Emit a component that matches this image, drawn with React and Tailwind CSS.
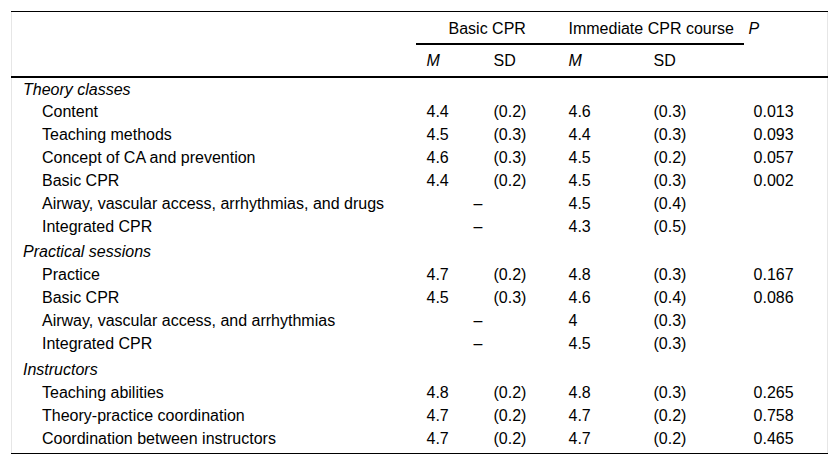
const rows = [
  { section: "Theory classes", h: "h-[22px] pt-[3px]" },
  { label: "Content", m1: "4.4", sd1: "(0.2)", m2: "4.6", sd2: "(0.3)", p: "0.013" },
  { label: "Teaching methods", m1: "4.5", sd1: "(0.3)", m2: "4.4", sd2: "(0.3)", p: "0.093" },
  { label: "Concept of CA and prevention", m1: "4.6", sd1: "(0.3)", m2: "4.5", sd2: "(0.2)", p: "0.057" },
  { label: "Basic CPR", m1: "4.4", sd1: "(0.2)", m2: "4.5", sd2: "(0.3)", p: "0.002" },
  { label: "Airway, vascular access, arrhythmias, and drugs", dash: true, m2: "4.5", sd2: "(0.4)" },
  { label: "Integrated CPR", dash: true, m2: "4.3", sd2: "(0.5)" },
  { section: "Practical sessions", h: "h-[25px] pt-[6px]" },
  { label: "Practice", m1: "4.7", sd1: "(0.2)", m2: "4.8", sd2: "(0.3)", p: "0.167" },
  { label: "Basic CPR", m1: "4.5", sd1: "(0.3)", m2: "4.6", sd2: "(0.4)", p: "0.086" },
  { label: "Airway, vascular access, and arrhythmias", dash: true, m2: "4", sd2: "(0.3)" },
  { label: "Integrated CPR", dash: true, m2: "4.5", sd2: "(0.3)" },
  { section: "Instructors", h: "h-[26px] pt-[7px]" },
  { label: "Teaching abilities", m1: "4.8", sd1: "(0.2)", m2: "4.8", sd2: "(0.3)", p: "0.265" },
  { label: "Theory-practice coordination", m1: "4.7", sd1: "(0.2)", m2: "4.7", sd2: "(0.2)", p: "0.758" },
  { label: "Coordination between instructors", m1: "4.7", sd1: "(0.2)", m2: "4.7", sd2: "(0.2)", p: "0.465", last: true },
];

function Row({ r }) {
  if (r.section) {
    return (
      <tr>
        <td colSpan={6} className={`${r.h} align-top pl-[11px] italic`}>
          {r.section}
        </td>
      </tr>
    );
  }
  const h = r.last ? "h-[28px] pt-[4px] align-top" : "h-[23px] pt-[4px] align-top";
  return (
    <tr>
      <td className={`${h} pl-[30px]`}>{r.label}</td>
      {r.dash ? (
        <td colSpan={2} className={`${h} pl-[58px]`}>–</td>
      ) : (
        <>
          <td className={`${h} pl-[11px]`}>{r.m1}</td>
          <td className={`${h} pl-[11px]`}>{r.sd1}</td>
        </>
      )}
      <td className={`${h} pl-[11px]`}>{r.m2}</td>
      <td className={`${h} pl-[11px]`}>{r.sd2}</td>
      <td className={`${h} pl-[10px]`}>{r.p}</td>
    </tr>
  );
}

export default function App() {
  return (
    <div className="w-[838px] h-[467px] bg-white pt-[11px] pl-[11px] font-['Liberation_Sans',Arial,sans-serif] text-[16px] text-black leading-[18px]">
      <table className="w-[816px] table-fixed border-collapse border-x border-x-[#e6e6e6]">
        <colgroup>
          <col className="w-[404px]" />
          <col className="w-[67px]" />
          <col className="w-[75px]" />
          <col className="w-[85px]" />
          <col className="w-[101px]" />
          <col className="w-[84px]" />
        </colgroup>
        <thead>
          <tr className="border-t border-t-black">
            <th rowSpan={2} className="border-b-2 border-b-black"></th>
            <th colSpan={2} className="h-[32px] align-top pt-[8px] border-b-2 border-b-black text-left font-normal pl-[33px]">
              Basic CPR
            </th>
            <th colSpan={2} className="h-[32px] align-top pt-[8px] border-b-2 border-b-black text-left font-normal pl-[11px]">
              Immediate CPR course
            </th>
            <th rowSpan={2} className="border-b-2 border-b-black text-left font-normal italic pl-[5px] align-top pt-[8px]">
              P
            </th>
          </tr>
          <tr>
            <th className="h-[33px] align-top pt-[7px] border-b-2 border-b-black text-left font-normal italic pl-[11px]">M</th>
            <th className="h-[33px] align-top pt-[7px] border-b-2 border-b-black text-left font-normal pl-[11px]">SD</th>
            <th className="h-[33px] align-top pt-[7px] border-b-2 border-b-black text-left font-normal italic pl-[11px]">M</th>
            <th className="h-[33px] align-top pt-[7px] border-b-2 border-b-black text-left font-normal pl-[11px]">SD</th>
          </tr>
        </thead>
        <tbody className="border-b border-b-black">
          {rows.map((r, i) => (
            <Row key={i} r={r} />
          ))}
        </tbody>
      </table>
    </div>
  );
}
